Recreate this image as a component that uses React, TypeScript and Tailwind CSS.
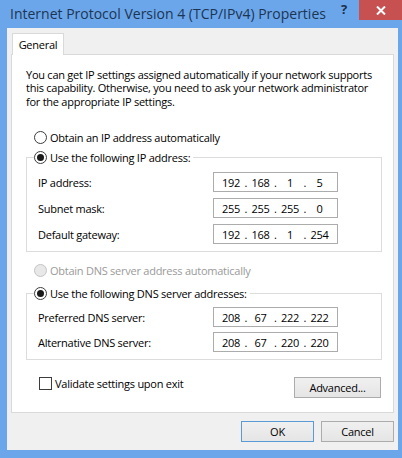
import React from "react";

function Radio({ checked, disabled }: { checked?: boolean; disabled?: boolean }) {
  return (
    <span
      className={
        disabled
          ? "w-[13px] h-[13px] rounded-full border border-[#c4c4c4] bg-[#e8e8e8] flex items-center justify-center shrink-0"
          : "w-[13px] h-[13px] rounded-full border border-[#3c3c3c] bg-white flex items-center justify-center shrink-0"
      }
    >
      {checked ? <span className="w-[7px] h-[7px] rounded-full bg-[#1a1a1a]" /> : null}
    </span>
  );
}

function IpBox({ parts }: { parts: string[] }) {
  return (
    <div className="w-[125px] h-[20px] border border-[#acacac] bg-white flex items-center pl-[6px] text-black">
      {parts.map((p, i) => (
        <React.Fragment key={i}>
          <span className="w-[22px] text-center">{p}</span>
          {i < 3 ? <span className="w-[7.5px] text-center">.</span> : null}
        </React.Fragment>
      ))}
    </div>
  );
}

function Row({ label, parts }: { label: string; parts: string[] }) {
  return (
    <div className="flex items-center h-[20px] pl-[11px]">
      <span className="w-[175px]">{label}</span>
      <IpBox parts={parts} />
    </div>
  );
}

export default function App() {
  return (
    <div className="w-[402px] h-[458px] bg-[#6ba6ea] flex flex-col font-['Open_Sans','Noto_Sans',sans-serif] text-[11px] tracking-[-0.25px] text-black leading-none">
      <div className="h-[28px] flex items-start shrink-0">
        <span className="pl-[10px] pt-[5px] text-[14px] tracking-normal leading-[18px] text-[#1b3553] whitespace-nowrap">
          Internet Protocol Version 4 (TCP/IPv4) Properties
        </span>
        <div className="ml-auto flex items-start">
          <span className="w-[30px] pt-[3px] text-center text-[13px] font-bold text-[#1b2f4a]">?</span>
          <div className="w-[43px] h-[20px] bg-[#c75050] flex items-center justify-center">
            <svg width="10" height="9" viewBox="0 0 10 9">
              <path d="M1 0.5 L9 8.5 M9 0.5 L1 8.5" stroke="white" strokeWidth="2" fill="none" />
            </svg>
          </div>
        </div>
      </div>

      <div className="flex-1 bg-[#f0f0f0] ml-[7px] mr-[4px] mb-[8px] px-[4px] pt-[5px] flex flex-col">
        <div className="w-[52px] h-[22px] ml-[1px] border-t border-l border-r border-[#d9d9d9] bg-white relative z-10 -mb-[1px] flex items-center justify-center">
          General
        </div>
        <div className="h-[359px] border border-[#d9d9d9] bg-white pl-[14px] pr-[11px] flex flex-col">
          <div className="mt-[13px] flex flex-col whitespace-nowrap">
            <span className="h-[13.4px] leading-[13.4px]">
              You can get IP settings assigned automatically if your network supports
            </span>
            <span className="h-[13.4px] leading-[13.4px]">
              this capability. Otherwise, you need to ask your network administrator
            </span>
            <span className="h-[13.4px] leading-[13.4px]">for the appropriate IP settings.</span>
          </div>

          <div className="mt-[21px] h-[16px] flex items-center pl-[8px] gap-[3px]">
            <Radio />
            <span>Obtain an IP address automatically</span>
          </div>

          <div className="mt-[12px] border border-[#dcdcdc] pb-[7px] flex flex-col">
            <div className="-mt-[9px] ml-[7px] h-[16px] w-fit bg-white pr-[3px] flex items-center gap-[3px]">
              <Radio checked />
              <span>Use the following IP address:</span>
            </div>
            <div className="mt-[7px] flex flex-col gap-[6px]">
              <Row label="IP address:" parts={["192", "168", "1", "5"]} />
              <Row label="Subnet mask:" parts={["255", "255", "255", "0"]} />
              <Row label="Default gateway:" parts={["192", "168", "1", "254"]} />
            </div>
          </div>

          <div className="mt-[10px] h-[16px] flex items-center pl-[8px] gap-[3px] text-[#9a9a9a]">
            <Radio disabled />
            <span>Obtain DNS server address automatically</span>
          </div>

          <div className="mt-[15px] border border-[#dcdcdc] pb-[7px] flex flex-col">
            <div className="-mt-[9px] ml-[7px] h-[16px] w-fit bg-white pr-[3px] flex items-center gap-[3px]">
              <Radio checked />
              <span>Use the following DNS server addresses:</span>
            </div>
            <div className="mt-[6px] flex flex-col gap-[5px]">
              <Row label="Preferred DNS server:" parts={["208", "67", "222", "222"]} />
              <Row label="Alternative DNS server:" parts={["208", "67", "220", "220"]} />
            </div>
          </div>

          <div className="mt-[17px] flex items-start justify-between">
            <div className="ml-[13px] h-[13px] flex items-center gap-[3px]">
              <span className="w-[13px] h-[13px] border border-[#3c3c3c] bg-white shrink-0" />
              <span>Validate settings upon exit</span>
            </div>
            <div className="w-[87px] h-[21px] mr-[1px] border border-[#acacac] bg-[linear-gradient(#f0f0f0,#e5e5e5)] flex items-center justify-center">
              Advanced...
            </div>
          </div>
        </div>

        <div className="mt-[8px] flex justify-end gap-[7px]">
          <div className="w-[73px] h-[21px] border border-[#5a9bd5] bg-[linear-gradient(#f0f0f0,#e5e5e5)] flex items-center justify-center">
            OK
          </div>
          <div className="w-[73px] h-[21px] border border-[#acacac] bg-[linear-gradient(#f0f0f0,#e5e5e5)] flex items-center justify-center">
            Cancel
          </div>
        </div>
      </div>
    </div>
  );
}
